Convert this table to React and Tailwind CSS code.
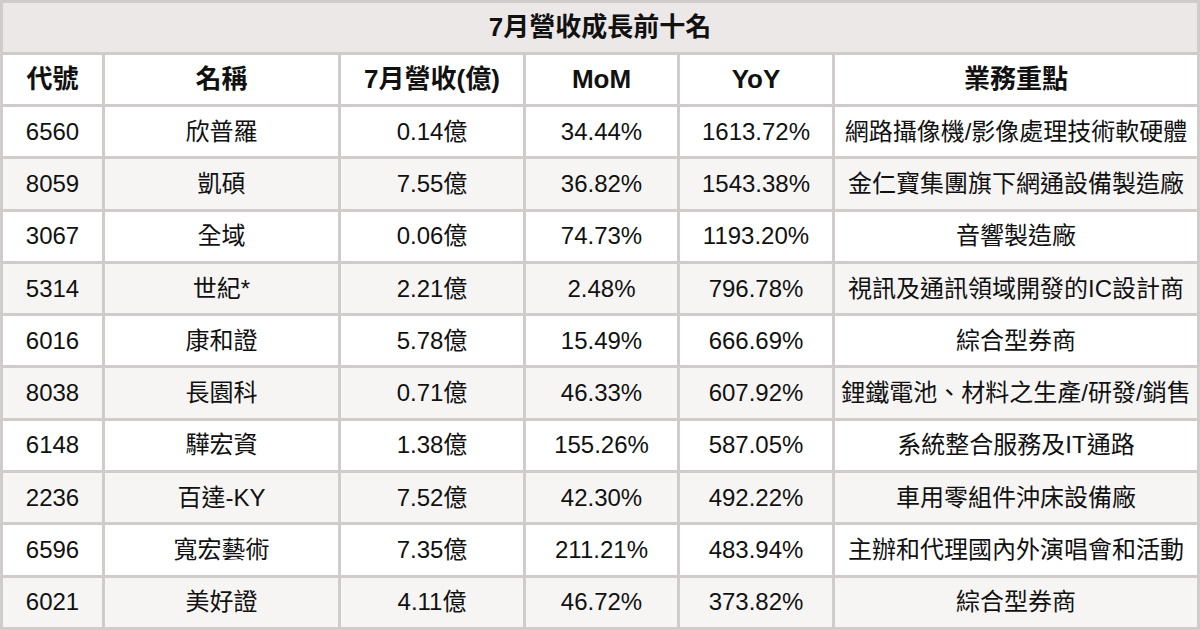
import React from 'react'

const rows = [
  ['6560', '欣普羅', '0.14億', '34.44%', '1613.72%', '網路攝像機/影像處理技術軟硬體'],
  ['8059', '凱碩', '7.55億', '36.82%', '1543.38%', '金仁寶集團旗下網通設備製造廠'],
  ['3067', '全域', '0.06億', '74.73%', '1193.20%', '音響製造廠'],
  ['5314', '世紀*', '2.21億', '2.48%', '796.78%', '視訊及通訊領域開發的IC設計商'],
  ['6016', '康和證', '5.78億', '15.49%', '666.69%', '綜合型券商'],
  ['8038', '長園科', '0.71億', '46.33%', '607.92%', '鋰鐵電池、材料之生產/研發/銷售'],
  ['6148', '驊宏資', '1.38億', '155.26%', '587.05%', '系統整合服務及IT通路'],
  ['2236', '百達-KY', '7.52億', '42.30%', '492.22%', '車用零組件沖床設備廠'],
  ['6596', '寬宏藝術', '7.35億', '211.21%', '483.94%', '主辦和代理國內外演唱會和活動'],
  ['6021', '美好證', '4.11億', '46.72%', '373.82%', '綜合型券商'],
]

const headers = ['代號', '名稱', '7月營收(億)', 'MoM', 'YoY', '業務重點']

export default function App() {
  return (
    <div
      className="w-[1200px] h-[630px] bg-[#d0cccb] p-[3px] grid gap-[3px] grid-cols-[99px_233px_182px_151px_152px_1fr] grid-rows-[49px_49px_repeat(10,1fr)] text-[#111]"
      style={{ fontFamily: '"Liberation Sans", "Noto Sans CJK TC", sans-serif' }}
    >
      <div className="col-span-6 bg-[#ece8e7] flex items-center justify-center text-[26px] font-bold">
        7月營收成長前十名
      </div>
      {headers.map((h) => (
        <div key={h} className="bg-white flex items-center justify-center text-[26px] font-bold">
          {h}
        </div>
      ))}
      {rows.map((r, i) =>
        r.map((c, j) => (
          <div
            key={i + '-' + j}
            className={`flex items-center justify-center text-[24px] whitespace-nowrap ${i % 2 === 1 ? 'bg-[#f6f5f4]' : 'bg-white'}`}
          >
            {c}
          </div>
        ))
      )}
    </div>
  )
}
